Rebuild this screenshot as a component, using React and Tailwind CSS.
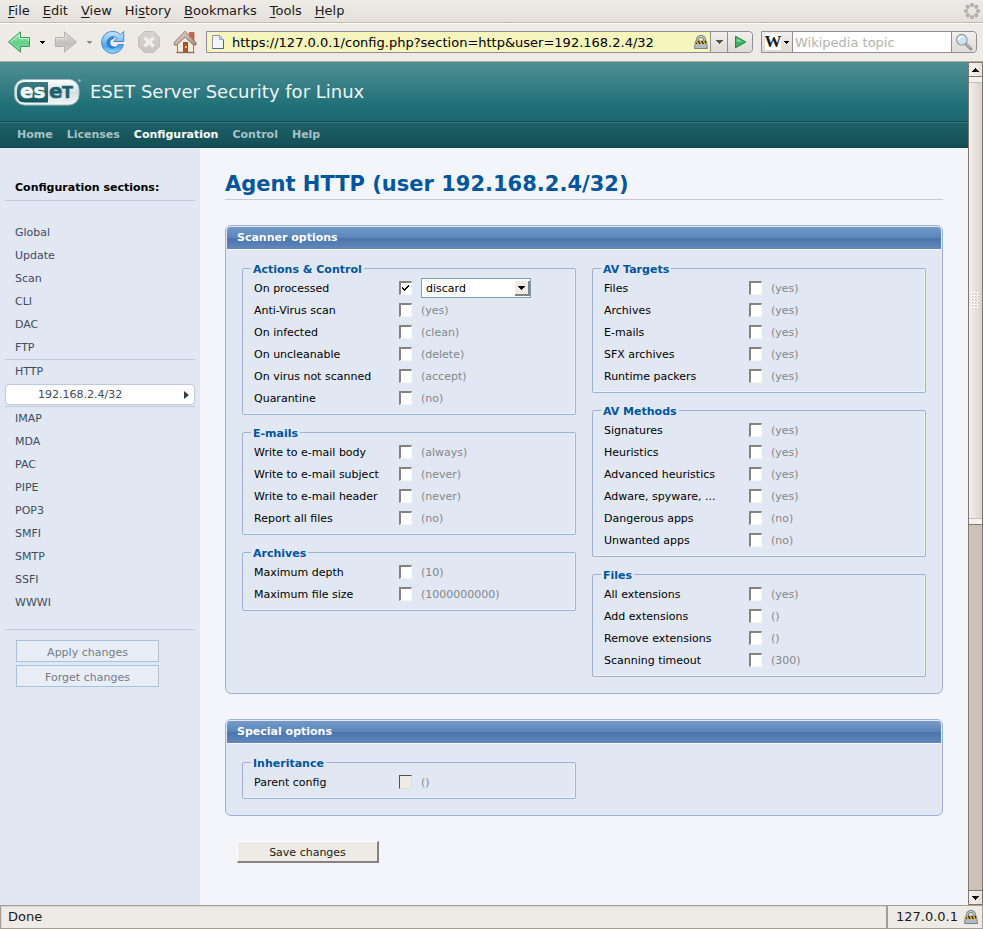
import React, { useState } from 'react';

const SANS = "font-['DejaVu_Sans',sans-serif]";

/* ---------- icons ---------- */

function BackIcon() {
  return (
    <svg width="24" height="24" viewBox="0 0 24 24" aria-hidden="true">
      <defs>
        <linearGradient id="backFill" x1="0" y1="0" x2="0" y2="1">
          <stop offset="0" stopColor="#b4ecc4" />
          <stop offset="0.5" stopColor="#63d08a" />
          <stop offset="1" stopColor="#86dc9c" />
        </linearGradient>
      </defs>
      <path d="M1.5 12 13.5 1.8V7.5H22.5V16.5H13.5V22.2Z" fill="url(#backFill)" stroke="#3a9a56" strokeLinejoin="round" />
      <path d="M3.5 12 12.4 4.5V8.6H21.4V11" fill="none" stroke="#d5f6dd" />
    </svg>
  );
}

function ForwardIcon() {
  return (
    <svg width="24" height="24" viewBox="0 0 24 24" aria-hidden="true">
      <defs>
        <linearGradient id="fwdFill" x1="0" y1="0" x2="0" y2="1">
          <stop offset="0" stopColor="#dcdad7" />
          <stop offset="0.6" stopColor="#c2c1bf" />
          <stop offset="1" stopColor="#d4d2cf" />
        </linearGradient>
      </defs>
      <path d="M22.5 12 10.5 1.8V7.5H1.5V16.5H10.5V22.2Z" fill="url(#fwdFill)" stroke="#b5b3b0" strokeLinejoin="round" />
      <path d="M2.5 11V8.6H11.6V4.5" fill="none" stroke="#e6e4e1" />
    </svg>
  );
}

function ReloadIcon() {
  return (
    <svg width="24" height="24" viewBox="0 0 24 24" aria-hidden="true">
      <defs>
        <linearGradient id="reloadFill" x1="0" y1="0" x2="0" y2="1">
          <stop offset="0" stopColor="#c4e4fa" />
          <stop offset="0.45" stopColor="#7fc0f2" />
          <stop offset="0.7" stopColor="#4aa6ec" />
          <stop offset="1" stopColor="#9be0fb" />
        </linearGradient>
      </defs>
      <path
        d="M22.7 1.3V11.5H12.8L16.2 8.1A5.6 5.6 0 1 0 17.3 14.5H22.4A11 11 0 1 1 19.4 4.6Z"
        fill="url(#reloadFill)"
        stroke="#4a8acb"
        strokeLinejoin="round"
      />
      <path d="M13.8 7.9A5.6 5.6 0 1 0 15 17L13 16.4A3.6 3.6 0 1 1 13 9Z" fill="#2a7fd0" />
    </svg>
  );
}

function StopIcon() {
  return (
    <svg width="24" height="24" viewBox="0 0 24 24" aria-hidden="true">
      <defs>
        <linearGradient id="stopFill" x1="0" y1="0" x2="0" y2="1">
          <stop offset="0" stopColor="#d6d4d2" />
          <stop offset="1" stopColor="#c8c6c4" />
        </linearGradient>
      </defs>
      <path d="M7.6 1.5H16.4L22.5 7.6V16.4L16.4 22.5H7.6L1.5 16.4V7.6Z" fill="url(#stopFill)" stroke="#bfbdbb" />
      <path d="M7.5 7.5 16.5 16.5M16.5 7.5 7.5 16.5" stroke="#f2f0ee" strokeWidth="3.2" />
    </svg>
  );
}

function HomeIcon() {
  return (
    <svg width="24" height="24" viewBox="0 0 24 24" aria-hidden="true">
      <defs>
        <linearGradient id="roofFill" x1="0" y1="0" x2="1" y2="1">
          <stop offset="0" stopColor="#ead9cf" />
          <stop offset="1" stopColor="#a98c7e" />
        </linearGradient>
      </defs>
      <rect x="16.5" y="2.5" width="4.5" height="8" fill="#d2603f" stroke="#a04a38" strokeWidth="0.6" />
      <path d="M4.5 11V22.5H20.5V11L12.5 4Z" fill="#f3ebe0" stroke="#9a7a68" />
      <path d="M12 1.2 23 12.5V15H20.4L12 7.2 3.8 15H1.2V12.5Z" fill="url(#roofFill)" stroke="#8d7063" strokeWidth="0.9" strokeLinejoin="round" />
      <rect x="10.5" y="12.5" width="4" height="9.5" fill="#b5513a" stroke="#7c5b3a" />
      <rect x="12" y="16" width="2" height="2" fill="#e6c74a" />
      <path d="M3.5 22.5H21.5" stroke="#8a6a56" strokeWidth="1.4" />
    </svg>
  );
}

function PageIcon() {
  return (
    <svg width="14" height="16" viewBox="0 0 14 16" aria-hidden="true">
      <path d="M1.5 1.5H8.5L12.5 5.5V14.5H1.5Z" fill="#f4f6fb" stroke="#8b98b4" />
      <path d="M8.5 1.5V5.5H12.5Z" fill="#c9d2e4" stroke="#9aa6bf" />
      <path d="M1.5 14.5H12.5V6" fill="none" stroke="#52698f" />
    </svg>
  );
}

function LockIcon() {
  return (
    <svg width="14" height="15" viewBox="0 0 14 15" aria-hidden="true">
      <path d="M3.5 6.5V4.6A3.5 3.2 0 0 1 10.5 4.6V6.5" fill="none" stroke="#7f8387" strokeWidth="3" />
      <path d="M3.5 6.5V4.6A3.5 3.2 0 0 1 10.5 4.6V6.5" fill="none" stroke="#d9dcdf" />
      <path d="M1.5 6H12.5L13.5 13.5H0.5Z" fill="#b4bac3" stroke="#7d8289" />
      <rect x="2" y="6" width="10" height="3" fill="#26221a" />
      <path d="M2.4 6 4.4 9M5.8 6 7.8 9M9.2 6 11.2 9" stroke="#e8c629" strokeWidth="1.5" />
    </svg>
  );
}

function GoIcon() {
  return (
    <svg width="13" height="14" viewBox="0 0 13 14" aria-hidden="true">
      <path d="M1.5 1.2 11.8 7 1.5 12.8Z" fill="#3fae62" stroke="#238a46" strokeLinejoin="round" />
      <path d="M2.8 3.5 8.8 6.8H2.8Z" fill="#86d79b" />
    </svg>
  );
}

function SearchIcon() {
  return (
    <svg width="18" height="18" viewBox="0 0 18 18" aria-hidden="true">
      <path d="M10.5 10.5 15.8 15.8" stroke="#8a8a8a" strokeWidth="3" strokeLinecap="round" />
      <path d="M11 10.6 15.6 15.2" stroke="#dcdcdc" strokeLinecap="round" />
      <circle cx="6.8" cy="6.8" r="5.3" fill="#cfe4f3" stroke="#9aa4ad" strokeWidth="1.3" />
      <path d="M3.6 7A3.6 3.6 0 0 1 8 3.6" fill="none" stroke="#fff" strokeWidth="1.6" />
    </svg>
  );
}

function Throbber() {
  const dots = [0, 45, 90, 135, 180, 225, 270, 315];
  return (
    <svg width="16" height="16" viewBox="0 0 16 16" aria-hidden="true">
      {dots.map((a) => (
        <circle key={a} cx="8" cy="2" r="2.1" fill="#b3b0ae" transform={`rotate(${a} 8 8)`} />
      ))}
    </svg>
  );
}

function Caret({ color = '#000', up = false }) {
  return (
    <svg width="7" height="4" viewBox="0 0 7 4" shapeRendering="crispEdges" aria-hidden="true" className="shrink-0">
      <path d={up ? 'M3 0H4V1H5V2H6V3H7V4H0V3H1V2H2V1H3Z' : 'M0 0H7V1H6V2H5V3H4V4H3V3H2V2H1V1H0Z'} fill={color} />
    </svg>
  );
}

function SmallCaret({ color = '#000' }) {
  return (
    <svg width="5" height="3" viewBox="0 0 5 3" shapeRendering="crispEdges" aria-hidden="true" className="shrink-0">
      <path d="M0 0H5V1H4V2H3V3H2V2H1V1H0Z" fill={color} />
    </svg>
  );
}

function EsetLogo() {
  return (
    <svg width="68" height="28" viewBox="0 0 68 28" role="img" aria-label="eset">
      <defs>
        <linearGradient id="logoRim" x1="0" y1="0" x2="0" y2="1">
          <stop offset="0" stopColor="#ffffff" />
          <stop offset="0.5" stopColor="#d5dfe2" />
          <stop offset="1" stopColor="#f2f6f7" />
        </linearGradient>
        <linearGradient id="logoCore" x1="0" y1="0" x2="0" y2="1">
          <stop offset="0" stopColor="#3a7d84" />
          <stop offset="1" stopColor="#14565d" />
        </linearGradient>
      </defs>
      <rect x="0.5" y="1.5" width="64.5" height="25.5" rx="10" fill="url(#logoRim)" stroke="#9fbdc1" />
      <path d="M34 4H11Q3 4 3 11.5V17Q3 24.5 11 24.5H34Z" fill="url(#logoCore)" />
      <g fontFamily="DejaVu Sans, sans-serif" fontWeight="700" strokeWidth="0.5">
        <text x="6" y="20" fontSize="20" fill="#f4f8f8" stroke="#f4f8f8">es</text>
        <text x="35" y="20" fontSize="20" fill="#1d626a" stroke="#1d626a">e</text>
        <text x="48" y="20" fontSize="16" fill="#1d626a" stroke="#1d626a">T</text>
      </g>
      <circle cx="65.5" cy="2.5" r="1.2" fill="#a7c4c7" />
    </svg>
  );
}

/* ---------- browser chrome ---------- */

const MENUS = [
  ['', 'F', 'ile'],
  ['', 'E', 'dit'],
  ['', 'V', 'iew'],
  ['Hi', 's', 'tory'],
  ['', 'B', 'ookmarks'],
  ['', 'T', 'ools'],
  ['', 'H', 'elp'],
];

function MenuBar() {
  return (
    <div className="flex h-[23px] items-center justify-between border-b border-[#c5b9ae] bg-linear-to-b from-[#efece8] to-[#e4dfd9] pr-[3px] pl-2">
      <nav aria-label="Menu bar" className="flex items-center gap-[13px]">
        {MENUS.map(([a, b, c]) => (
          <button key={a + b + c} type="button" className="leading-4">
            {a}
            <span className="underline underline-offset-2">{b}</span>
            {c}
          </button>
        ))}
      </nav>
      <Throbber />
    </div>
  );
}

function ToolBar() {
  return (
    <div className="flex h-[39px] items-center border-t border-b border-t-white border-b-[#b7ab9f] bg-[#eeebe7] pr-[6px] pb-px pl-[7px]">
      <button type="button" aria-label="Back"><BackIcon /></button>
      <button type="button" aria-label="Back history" className="flex w-[23px] justify-center"><SmallCaret /></button>
      <button type="button" aria-label="Forward"><ForwardIcon /></button>
      <button type="button" aria-label="Forward history" className="flex w-[23px] justify-center"><SmallCaret color="#8a8886" /></button>
      <button type="button" aria-label="Reload"><ReloadIcon /></button>
      <button type="button" aria-label="Stop" className="ml-3"><StopIcon /></button>
      <button type="button" aria-label="Home" className="ml-3"><HomeIcon /></button>

      <form className="ml-[9px] flex h-[22px] min-w-0 flex-1 items-stretch rounded-r border border-[#8e8e98]" onSubmit={(e) => e.preventDefault()}>
        <div className="flex min-w-0 flex-1 items-center bg-[#f5f5bd] pr-[2px] pl-1">
          <PageIcon />
          <input
            aria-label="Address"
            defaultValue="https://127.0.0.1/config.php?section=http&user=192.168.2.4/32"
            className="ml-[7px] h-full min-w-0 flex-1 bg-transparent pt-px text-black outline-none"
          />
          <LockIcon />
        </div>
        <button type="button" aria-label="Show history" className="flex w-[17px] items-center justify-center border-l border-[#8e8e98] bg-linear-to-b from-[#f2f0ed] to-[#dedad6]">
          <Caret color="#55534f" />
        </button>
        <button type="submit" aria-label="Go" className="flex w-[25px] items-center justify-center rounded-r border-l border-[#8e8e98] bg-linear-to-b from-[#f2f0ed] to-[#dedad6]">
          <GoIcon />
        </button>
      </form>

      <form className="ml-2 flex h-[22px] w-[216px] items-stretch rounded-r border border-[#8e8e98]" onSubmit={(e) => e.preventDefault()}>
        <button type="button" aria-label="Search engine" className="flex w-[31px] items-center justify-center gap-[3px] border-r border-[#8e8e98] bg-linear-to-b from-[#f2f0ed] to-[#dedad6]">
          <span className="flex w-4 justify-center bg-white font-['Liberation_Serif',serif] text-[17px] leading-4 font-bold">W</span>
          <SmallCaret />
        </button>
        <input aria-label="Search" placeholder="Wikipedia topic" className="min-w-0 flex-1 bg-white pt-px pl-[2px] outline-none placeholder:text-[#b5b2ad] placeholder:opacity-100" />
        <button type="submit" aria-label="Run search" className="flex w-[25px] items-center justify-center rounded-r border-l border-[#8e8e98] bg-linear-to-b from-[#f2f0ed] to-[#dedad6]">
          <SearchIcon />
        </button>
      </form>
    </div>
  );
}

function ScrollBar() {
  const line = <div className="h-px shrink-0 bg-[#c9c1b9]" />;
  return (
    <div aria-hidden="true" className="flex w-[15px] shrink-0 flex-col border-x border-[#84776a] bg-[#cbc1b7]">
      <div className="flex h-[15px] shrink-0 items-center justify-center border-y border-[#84776a] bg-linear-to-r from-[#f6f4f2] to-[#e4dfda]"><Caret up /></div>
      <div className="flex flex-[55] flex-col bg-linear-to-r from-[#f3f0ed] to-[#dcd4cc]">
        <div className="h-[5px] shrink-0 bg-[#f3f0ed]" />
        {line}
        <div className="flex flex-1 items-center justify-center">
          <svg width="9" height="17" viewBox="0 0 9 17" shapeRendering="crispEdges">
            {[0, 3, 6, 9, 12, 15].map((y) =>
              [0, 3, 6].map((x) => (
                <g key={`${x}-${y}`}>
                  <rect x={x} y={y} width="2" height="2" fill="#fff" />
                  <rect x={x + 1} y={y + 1} width="1" height="1" fill="#c5bbb1" />
                </g>
              ))
            )}
          </svg>
        </div>
        {line}
        <div className="h-[5px] shrink-0 bg-[#f3f0ed]" />
      </div>
      <div className="flex-[45] border-t border-[#84776a]" />
      <div className="flex h-[15px] shrink-0 items-center justify-center border-y border-[#84776a] bg-linear-to-r from-[#f6f4f2] to-[#e4dfda]"><Caret /></div>
    </div>
  );
}

function StatusBar() {
  return (
    <footer className="flex h-6 shrink-0 items-stretch border border-[#a99c90] bg-[#eeebe7]">
      <div className="flex flex-1 items-center border-t border-l border-[#dcd6d0] pb-px pl-[6px]">Done</div>
      <div className="flex items-center gap-[6px] border-l-2 border-[#a99c90] pr-1 pl-2">
        <span>127.0.0.1</span>
        <LockIcon />
      </div>
    </footer>
  );
}

/* ---------- web interface ---------- */

function SiteHeader() {
  const tabs = ['Home', 'Licenses', 'Configuration', 'Control', 'Help'];
  return (
    <header>
      <div className="flex h-[60px] items-center gap-2 border-b border-[#124a50] bg-linear-to-b from-[#4f8f94] via-[#22727a] via-70% to-[#1c676e] pl-[14px] text-lg text-[#eef5f5]">
        <EsetLogo />
        <span>ESET Server Security for Linux</span>
      </div>
      <nav aria-label="Main" className="flex h-[26px] items-center gap-[14px] border-t border-b border-t-[#357880] border-b-[#0f444a] bg-linear-to-b from-[#1b6067] to-[#154f56] pt-px pl-[17px] text-[11px] font-bold">
        {tabs.map((t) => (
          <a key={t} href="#" className={t === 'Configuration' ? 'text-white' : 'text-[#a5c3c5]'}>{t}</a>
        ))}
      </nav>
    </header>
  );
}

function SectionLink({ children }) {
  return <a href="#" className="flex h-[23px] items-center pl-[10px] leading-4">{children}</a>;
}

function Sidebar() {
  const top = ['Global', 'Update', 'Scan', 'CLI', 'DAC', 'FTP'];
  const rest = ['IMAP', 'MDA', 'PAC', 'PIPE', 'POP3', 'SMFI', 'SMTP', 'SSFI', 'WWWI'];
  const button = 'h-[22px] w-[143px] border border-[#a9c1db] bg-[#e8edf6] pt-[3px] leading-4 text-[#757b88]';
  return (
    <aside className="w-[200px] shrink-0 bg-[#e1e8f4] px-[5px] pt-[26px] text-[11px] text-[#414b5c]">
      <h2 className="h-[27px] border-b border-[#c3cbdb] pl-[10px] leading-7 font-bold text-black">Configuration sections:</h2>
      <nav aria-label="Configuration sections" className="border-b border-[#c3cbdb] pt-5 pb-[15px]">
        {top.map((s) => <SectionLink key={s}>{s}</SectionLink>)}
        <div className="border-y border-[#c3cbdb] pb-px">
          <SectionLink>HTTP</SectionLink>
          <a href="#" className="mt-px flex h-[21px] items-center justify-between rounded-sm border border-[#bfc9dc] bg-white pr-[5px] pl-8 leading-4">
            <span>192.168.2.4/32</span>
            <svg width="5" height="8" viewBox="0 0 5 8" aria-hidden="true"><path d="M0 0 5 4 0 8Z" fill="#333c4e" /></svg>
          </a>
        </div>
        {rest.map((s) => <SectionLink key={s}>{s}</SectionLink>)}
      </nav>
      <div className="flex flex-col gap-[3px] pt-[10px] pl-[11px]">
        <button type="button" className={button}>Apply changes</button>
        <button type="button" className={button}>Forget changes</button>
      </div>
    </aside>
  );
}

function Option({ id, label, value, options, disabled }) {
  const [checked, setChecked] = useState(Boolean(options));
  return (
    <div className="flex h-[22px] items-center">
      <label htmlFor={id} className="w-[145px] shrink-0 pt-px leading-4 text-black">{label}</label>
      <span className="relative mr-[9px] flex shrink-0">
        <input
          id={id}
          type="checkbox"
          disabled={disabled}
          checked={checked}
          onChange={(e) => setChecked(e.target.checked)}
          className="h-[14px] w-[13px] appearance-none border-t-2 border-r border-b border-l-2 border-t-[#858280] border-r-[#f7f6f4] border-b-[#f7f6f4] border-l-[#858280] bg-white disabled:border-t disabled:border-l disabled:border-t-[#55524e] disabled:border-r-[#e0dbd5] disabled:border-b-[#e0dbd5] disabled:border-l-[#55524e] disabled:bg-[#eeebe6]"
        />
        {checked && (
          <svg width="7" height="6" viewBox="0 0 7 6" shapeRendering="crispEdges" aria-hidden="true" className="pointer-events-none absolute top-1 left-[3px]">
            <path d="M0 2H1V3H2V4H3V3H4V2H5V1H6V0H7V2H6V3H5V4H4V5H3V6H2V5H1V4H0Z" fill="#000" />
          </svg>
        )}
      </span>
      {options ? (
        <span className="relative flex">
          <select aria-label={`${label} action`} className="h-5 w-[110px] appearance-none border border-[#7f9db9] bg-white pt-px pl-1 leading-4 text-black outline-none">
            {options.map((o) => <option key={o}>{o}</option>)}
          </select>
          <span className="pointer-events-none absolute top-[3px] right-px flex h-[15px] w-[15px] items-center justify-center border-r-2 border-b-2 border-[#858280] bg-[#eeebe6]">
            <Caret />
          </span>
        </span>
      ) : (
        <span className="pt-px leading-4 text-[#848789]">({value})</span>
      )}
    </div>
  );
}

function Group({ title, rows }) {
  return (
    <fieldset className="min-w-0 rounded-xs border border-[#9db2d4] pt-px pb-[5px] pl-[11px] shadow-[inset_-1px_-1px_0_#eff3fa]">
      <legend className="-ml-[3px] h-4 px-[2px] pt-[3px] leading-[13px] font-bold text-[#00559c]">{title}</legend>
      {rows.map(([label, value, extra]) => (
        <Option key={label} id={`${title}-${label}`.replace(/\W+/g, '-')} label={label} value={value} {...extra} />
      ))}
    </fieldset>
  );
}

function Panel({ title, columns }) {
  return (
    <section className="rounded-md border border-[#9fb2d3] bg-[#e1e8f4] p-px">
      <h2 className="h-[22px] rounded-t bg-[linear-gradient(#7499c9,#5a86ba_50%,#4a74ad_50%,#6388bc)] pl-[10px] leading-[22px] font-bold text-white shadow-[0_1px_0_#f4f7fb]">{title}</h2>
      <div className="grid grid-cols-2 gap-4 px-[15px] pt-[11px] pb-[15px]">
        {columns.map((groups, i) => (
          <div key={i} className="flex min-w-0 flex-col gap-[9px]">
            {groups.map(([t, rows]) => <Group key={t} title={t} rows={rows} />)}
          </div>
        ))}
      </div>
    </section>
  );
}

const SCANNER = [
  [
    ['Actions & Control', [
      ['On processed', '', { options: ['discard', 'accept', 'defer', 'reject'] }],
      ['Anti-Virus scan', 'yes'],
      ['On infected', 'clean'],
      ['On uncleanable', 'delete'],
      ['On virus not scanned', 'accept'],
      ['Quarantine', 'no'],
    ]],
    ['E-mails', [
      ['Write to e-mail body', 'always'],
      ['Write to e-mail subject', 'never'],
      ['Write to e-mail header', 'never'],
      ['Report all files', 'no'],
    ]],
    ['Archives', [
      ['Maximum depth', '10'],
      ['Maximum file size', '1000000000'],
    ]],
  ],
  [
    ['AV Targets', [
      ['Files', 'yes'],
      ['Archives', 'yes'],
      ['E-mails', 'yes'],
      ['SFX archives', 'yes'],
      ['Runtime packers', 'yes'],
    ]],
    ['AV Methods', [
      ['Signatures', 'yes'],
      ['Heuristics', 'yes'],
      ['Advanced heuristics', 'yes'],
      ['Adware, spyware, ...', 'yes'],
      ['Dangerous apps', 'no'],
      ['Unwanted apps', 'no'],
    ]],
    ['Files', [
      ['All extensions', 'yes'],
      ['Add extensions', ''],
      ['Remove extensions', ''],
      ['Scanning timeout', '300'],
    ]],
  ],
];

const SPECIAL = [[['Inheritance', [['Parent config', '', { disabled: true }]]]]];

export default function App() {
  return (
    <div className={`${SANS} flex min-h-screen flex-col text-[13px] text-[#1a1a1a]`}>
      <MenuBar />
      <ToolBar />
      <div className="flex flex-1 items-stretch">
        <div className="flex min-w-0 flex-1 flex-col">
          <SiteHeader />
          <div className="flex flex-1 items-stretch">
            <Sidebar />
            <main className="flex min-w-0 flex-1 flex-col bg-[#f3f5fa] px-[25px] pt-5 pb-10 text-[11px]">
              <h1 className="mb-[25px] h-8 border-b border-[#c3cbdb] text-[21px] leading-8 font-bold text-[#00559c]">Agent HTTP (user 192.168.2.4/32)</h1>
              <form className="flex flex-col items-stretch gap-[25px]" onSubmit={(e) => e.preventDefault()}>
                <Panel title="Scanner options" columns={SCANNER} />
                <Panel title="Special options" columns={SPECIAL} />
                <button type="submit" className="ml-3 h-[22px] w-[142px] self-start border-t border-r-2 border-b-2 border-l border-t-white border-r-[#858280] border-b-[#858280] border-l-white bg-[#eeebe6] pt-[3px] leading-4 text-[#1a1a1a]">Save changes</button>
              </form>
            </main>
          </div>
        </div>
        <ScrollBar />
      </div>
      <StatusBar />
    </div>
  );
}
